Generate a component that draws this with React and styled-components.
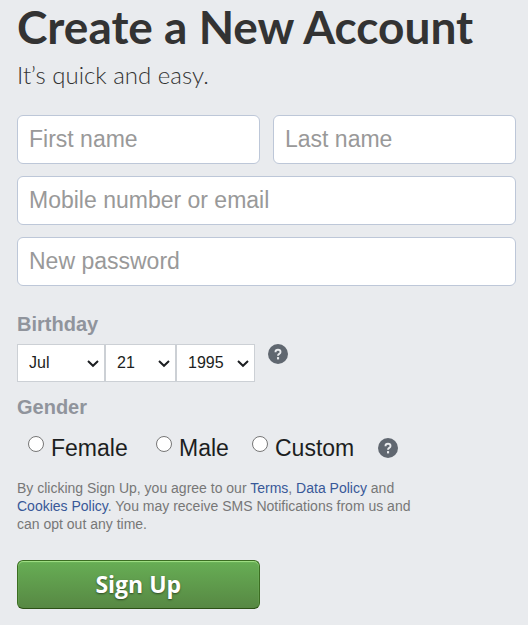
import React from "react";
import styled, { createGlobalStyle } from "styled-components";

const GlobalStyle = createGlobalStyle`
  *, *::before, *::after { box-sizing: border-box; }
  body {
    margin: 0;
    background: #e9ebee;
    color: #1c1e21;
    font-family: "Liberation Sans", Arial, sans-serif;
  }
`;

const Page = styled.main`
  padding: 0 12px 16px 17px;
`;

const Title = styled.h1`
  margin: 0;
  color: #333;
  font: 700 46px/54px Lato, "Open Sans", sans-serif;
  white-space: nowrap;
`;

const Subtitle = styled.p`
  margin: 6px 0 25px;
  color: #333;
  font: 300 24px/30px Lato, "Open Sans", sans-serif;
`;

const Form = styled.form`
  display: flex;
  flex-direction: column;
`;

const Fields = styled.div`
  display: grid;
  grid-template-columns: 1fr 1fr;
  gap: 12px 13px;
  margin-bottom: 26px;
`;

const TextField = styled.input`
  grid-column: ${(p) => (p.$wide ? "1 / -1" : "auto")};
  width: 100%;
  min-width: 0;
  height: 49px;
  padding: 0 11px;
  border: 1px solid #bdc7d8;
  border-radius: 6px;
  background: #fff;
  color: #1c1e21;
  font: 23px "Liberation Sans", Arial, sans-serif;
  &::placeholder { color: #999; opacity: 1; }
`;

const Group = styled.fieldset`
  min-width: 0;
  margin: 0;
  padding: 0;
  border: 0;
`;

const Legend = styled.legend`
  padding: 0;
  color: #90949c;
  font-size: 20px;
  font-weight: 700;
  line-height: 24px;
`;

const DateRow = styled.div`
  display: flex;
  align-items: flex-start;
  margin: 8px 0 13px;
`;

const SelectBox = styled.div`
  display: grid;
  grid-template-columns: 1fr 19px;
  align-items: center;
  width: ${(p) => p.$width}px;
`;

const Select = styled.select`
  grid-area: 1 / 1 / 2 / 3;
  appearance: none;
  width: 100%;
  height: 38px;
  padding: 0 20px 2px 11px;
  border: 1px solid #ccd0d5;
  border-radius: 0;
  background: #fff;
  color: #1c1e21;
  font: 16px "Liberation Sans", Arial, sans-serif;
`;

const Chevron = styled.svg`
  grid-area: 1 / 2;
  width: 14px;
  height: 10px;
  pointer-events: none;
`;

const HelpButton = styled.button`
  flex: none;
  width: 20px;
  height: 20px;
  margin-left: ${(p) => p.$gap}px;
  padding: 0;
  border: 0;
  border-radius: 50%;
  background: none;
  svg { display: block; }
`;

const GenderRow = styled.div`
  display: grid;
  grid-template-columns: 128px 96px 126px auto;
  justify-content: start;
  align-items: center;
  margin: 14px 0 16px 11px;
`;

const RadioLabel = styled.label`
  display: flex;
  align-items: flex-start;
  gap: 7px;
  font-size: 23px;
  line-height: 30px;
`;

const Radio = styled.input`
  appearance: none;
  width: 16px;
  height: 16px;
  margin: 3px 0 0;
  border: 1px solid #767676;
  border-radius: 50%;
  background: #fff;
  &:checked { box-shadow: inset 0 0 0 3px #fff; background: #3b5998; }
`;

const Terms = styled.p`
  max-width: 400px;
  margin: 0 0 27px;
  color: #777;
  font-size: 14px;
  line-height: 18px;
`;

const TermsLink = styled.a`
  color: #385898;
  text-decoration: none;
`;

const SubmitButton = styled.button`
  width: calc(50% - 7px);
  height: 49px;
  padding: 0 0 2px;
  border: 1px solid;
  border-color: #3b6e22 #3b6e22 #2c5115;
  border-radius: 6px;
  background: linear-gradient(#67ae55, #578843);
  box-shadow: inset 0 1px 1px #a4e388;
  color: #fff;
  font: 700 23px "Open Sans", sans-serif;
  text-shadow: 0 1px 2px rgba(0, 0, 0, 0.5);
`;

function HelpIcon({ label, gap }) {
  return (
    <HelpButton type="button" aria-label={label} $gap={gap}>
      <svg width="20" height="20" viewBox="0 0 20 20" fill="none" aria-hidden="true">
        <circle cx="10" cy="10" r="10" fill="#606770" />
        <path d="M7.5 8.2V8C7.5 6.6 8.4 5.8 10 5.8s2.5.8 2.5 2.1c0 1-.5 1.5-1.3 2-.8.5-1.2.8-1.2 1.8" stroke="#e9ebee" strokeWidth="1.9" />
        <rect x="9" y="13.1" width="2.1" height="2.3" fill="#e9ebee" />
      </svg>
    </HelpButton>
  );
}

function DatePart({ label, width, options, value }) {
  return (
    <SelectBox $width={width}>
      <Select aria-label={label} defaultValue={value}>
        {options.map((option) => (
          <option key={option}>{option}</option>
        ))}
      </Select>
      <Chevron viewBox="0 0 14 10" aria-hidden="true">
        <path d="M2 3l5 4.8L12 3" fill="none" stroke="#1c1e21" strokeWidth="2" />
      </Chevron>
    </SelectBox>
  );
}

const months = ["Jan", "Feb", "Mar", "Apr", "May", "Jun", "Jul", "Aug", "Sep", "Oct", "Nov", "Dec"];
const days = Array.from({ length: 31 }, (_, i) => String(i + 1));
const years = Array.from({ length: 100 }, (_, i) => String(2020 - i));

export default function App() {
  return (
    <>
      <GlobalStyle />
      <Page>
        <Title>Create a New Account</Title>
        <Subtitle>It’s quick and easy.</Subtitle>
        <Form onSubmit={(event) => event.preventDefault()}>
          <Fields>
            <TextField type="text" placeholder="First name" aria-label="First name" />
            <TextField type="text" placeholder="Last name" aria-label="Last name" />
            <TextField $wide type="text" placeholder="Mobile number or email" aria-label="Mobile number or email" />
            <TextField $wide type="password" placeholder="New password" aria-label="New password" />
          </Fields>
          <Group>
            <Legend>Birthday</Legend>
            <DateRow>
              <DatePart label="Month" width={88} options={months} value="Jul" />
              <DatePart label="Day" width={71} options={days} value="21" />
              <DatePart label="Year" width={79} options={years} value="1995" />
              <HelpIcon label="Birthday help" gap={13} />
            </DateRow>
          </Group>
          <Group>
            <Legend>Gender</Legend>
            <GenderRow>
              {["Female", "Male", "Custom"].map((gender) => (
                <RadioLabel key={gender}>
                  <Radio type="radio" name="gender" value={gender} />
                  {gender}
                </RadioLabel>
              ))}
              <HelpIcon label="Gender help" gap={0} />
            </GenderRow>
          </Group>
          <Terms>
            By clicking Sign Up, you agree to our <TermsLink href="#terms">Terms</TermsLink>,{" "}
            <TermsLink href="#data">Data Policy</TermsLink> and{" "}
            <TermsLink href="#cookies">Cookies Policy</TermsLink>. You may receive SMS
            Notifications from us and can opt out any time.
          </Terms>
          <SubmitButton type="submit">Sign Up</SubmitButton>
        </Form>
      </Page>
    </>
  );
}
